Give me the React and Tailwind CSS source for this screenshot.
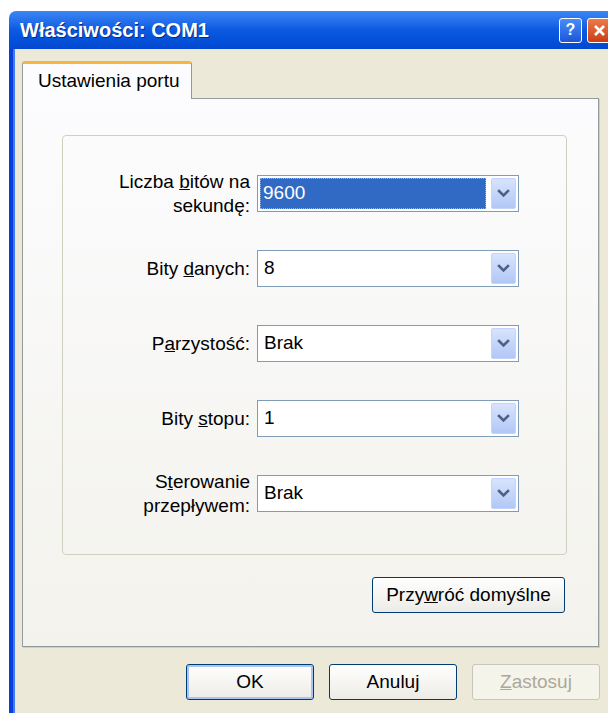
import React from 'react';

// Windows XP "Właściwości: COM1" port settings dialog

function Chevron() {
  return (
    <svg width="13" height="9" viewBox="0 0 13 9">
      <path d="M2 2 L6.5 6.5 L11 2" stroke="#4d6185" strokeWidth="2.6" fill="none" strokeLinecap="square" />
    </svg>
  );
}

function Combo({ value, selected }) {
  return (
    <div className="flex h-[37px] w-[262px] shrink-0 items-center border border-[#7f9db9] bg-white p-[2px]">
      <div
        className={
          selected
            ? 'flex h-full flex-1 items-center bg-[#316ac5] pl-[3px] text-white outline-1 -outline-offset-1 outline-dotted outline-[#8fb0e6]'
            : 'flex h-full flex-1 items-center pl-[4px]'
        }
      >
        {value}
      </div>
      <div className="ml-[5px] flex h-full w-[25px] items-center justify-center rounded-[2px] border border-[#c3d3fd] bg-linear-to-b from-[#d8e4fe] to-[#b2c7f6]">
        <Chevron />
      </div>
    </div>
  );
}

function Field({ label, value, selected }) {
  return (
    <div className="flex h-[37px] items-center gap-[7px]">
      <div className="w-[187px] shrink-0 text-right leading-[24px]">{label}</div>
      <Combo value={value} selected={selected} />
    </div>
  );
}

function XpButton({ children, primary, disabled, className = '' }) {
  let cls = 'flex h-[36px] items-center justify-center rounded-[3px] border ';
  if (disabled) {
    cls += 'border-[#c9c7ba] bg-[#f5f4ea] text-[#aca899]';
  } else if (primary) {
    cls += 'border-[#003c74] bg-linear-to-b from-[#ffffff] to-[#ecebe6] shadow-[inset_0_0_0_2px_#a8c4f0]';
  } else {
    cls += 'border-[#003c74] bg-linear-to-b from-[#ffffff] to-[#ecebe6]';
  }
  return <div className={cls + ' ' + className}>{children}</div>;
}

export default function App() {
  return (
    <div className="h-[713px] w-[608px] overflow-hidden bg-white pl-[9px] pt-[11px] font-['Liberation_Sans',Arial,sans-serif] text-[19px] text-black">
      <div className="flex h-[720px] w-[603px] flex-col">
        {/* pasek tytułu */}
        <div className="flex h-[38px] items-center rounded-tl-[7px] bg-linear-to-b from-[#3d86f4] via-[#0a5ae2] to-[#0248d0] pl-[11px] pr-0">
          <span className="flex-1 text-[20px] font-bold text-white [text-shadow:1px_1px_0_#0a2a8a]">
            Właściwości: COM1
          </span>
          <div className="flex items-center gap-[5px]">
            <div className="flex h-[25px] w-[23px] items-center justify-center rounded-[3px] border border-white bg-linear-to-b from-[#4a8cf7] to-[#1d55d8] text-[16px] font-bold leading-none text-white">
              ?
            </div>
            <div className="flex h-[25px] w-[25px] items-center justify-center rounded-[3px] border border-white bg-linear-to-b from-[#ec7a4c] to-[#c93c10]">
              <svg width="13" height="13" viewBox="0 0 13 13">
                <path d="M2 2 L11 11 M11 2 L2 11" stroke="#fff" strokeWidth="2.6" />
              </svg>
            </div>
          </div>
        </div>

        <div className="flex flex-1">
          {/* lewa ramka okna */}
          <div className="w-[6px] border-r-[2px] border-r-[#3f7cf2] bg-[#0a3fdc]" />

          <div className="flex-1 bg-[#ece9d8] pl-[7px] pt-[12px]">
            {/* zakładka */}
            <div className="relative z-10 -mb-px flex h-[38px] w-[170px] items-center rounded-t-[3px] border border-b-0 border-[#919b9c] border-t-[3px] border-t-[#f7b440] bg-[#fcfcfe] pl-[15px]">
              Ustawienia portu
            </div>

            {/* strona zakładki */}
            <div className="h-[549px] w-[577px] border border-[#919b9c] bg-linear-to-b from-[#fcfcfe] to-[#f3f2ec] pl-[39px] pt-[36px] shadow-[1px_1px_0_#d0cebf]">
              <div className="flex w-[505px] flex-col gap-[38px] rounded-[4px] border border-[#d0d0bf] pb-[42px] pt-[39px]">
                <Field
                  label={
                    <>
                      Liczba <span className="underline">b</span>itów na
                      <br />
                      sekundę:
                    </>
                  }
                  value="9600"
                  selected
                />
                <Field
                  label={
                    <>
                      Bity <span className="underline">d</span>anych:
                    </>
                  }
                  value="8"
                />
                <Field
                  label={
                    <>
                      P<span className="underline">a</span>rzystość:
                    </>
                  }
                  value="Brak"
                />
                <Field
                  label={
                    <>
                      Bity <span className="underline">s</span>topu:
                    </>
                  }
                  value="1"
                />
                <Field
                  label={
                    <>
                      S<span className="underline">t</span>erowanie
                      <br />
                      przepływem:
                    </>
                  }
                  value="Brak"
                />
              </div>

              <div className="mt-[22px] flex w-[505px] justify-end pr-[2px]">
                <XpButton className="h-[36px] w-[193px]">
                  Przy<span className="underline">w</span>róć domyślne
                </XpButton>
              </div>
            </div>

            {/* przyciski okna */}
            <div className="mt-[17px] flex w-[578px] justify-end gap-[15px]">
              <XpButton primary className="w-[128px]">OK</XpButton>
              <XpButton className="w-[128px]">Anuluj</XpButton>
              <XpButton disabled className="w-[128px]">
                <span className="underline">Z</span>astosuj
              </XpButton>
            </div>
          </div>
        </div>
      </div>
    </div>
  );
}
